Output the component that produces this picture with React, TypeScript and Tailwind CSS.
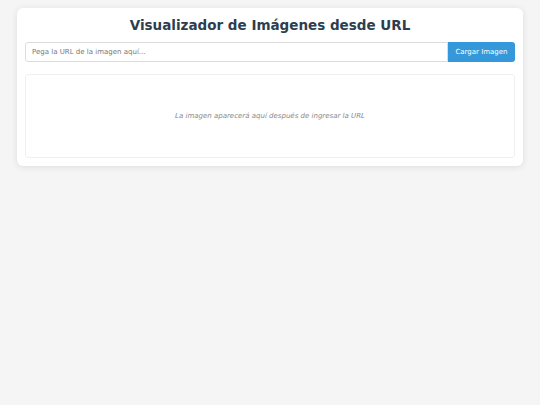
import { useState } from 'react';

export default function App() {
  const [url, setUrl] = useState('');
  const [src, setSrc] = useState('');

  return (
    <div className="min-h-screen bg-[#f5f5f5] pt-2 font-['DejaVu_Sans',sans-serif]">
      <div className="mx-auto w-[506px] rounded-[6px] bg-white p-2 shadow-[0_1px_7px_rgba(0,0,0,0.1)]">
        <h1 className="mb-2 text-center text-[13.5px] font-bold leading-[18px] text-[#2c3e50]">
          Visualizador de Imágenes desde URL
        </h1>
        <div className="flex">
          <input
            value={url}
            onChange={(e) => setUrl(e.target.value)}
            placeholder="Pega la URL de la imagen aquí..."
            className="h-5 flex-1 rounded-l-[3px] border border-[#ddd] px-[6px] text-[7px] text-[#333] outline-none placeholder:text-[#777]"
          />
          <button
            onClick={() => setSrc(url)}
            className="h-5 w-[67px] rounded-r-[3px] bg-[#3498db] text-[7px] text-white"
          >
            Cargar Imagen
          </button>
        </div>
        <div className="mt-3 flex h-[84px] items-center justify-center rounded-[3px] border border-[#f0f0f0]">
          {src ? (
            <span className="text-[7px] text-[#888]">{src}</span>
          ) : (
            <p className="text-[7px] italic text-[#888]">
              La imagen aparecerá aquí después de ingresar la URL
            </p>
          )}
        </div>
      </div>
    </div>
  );
}
